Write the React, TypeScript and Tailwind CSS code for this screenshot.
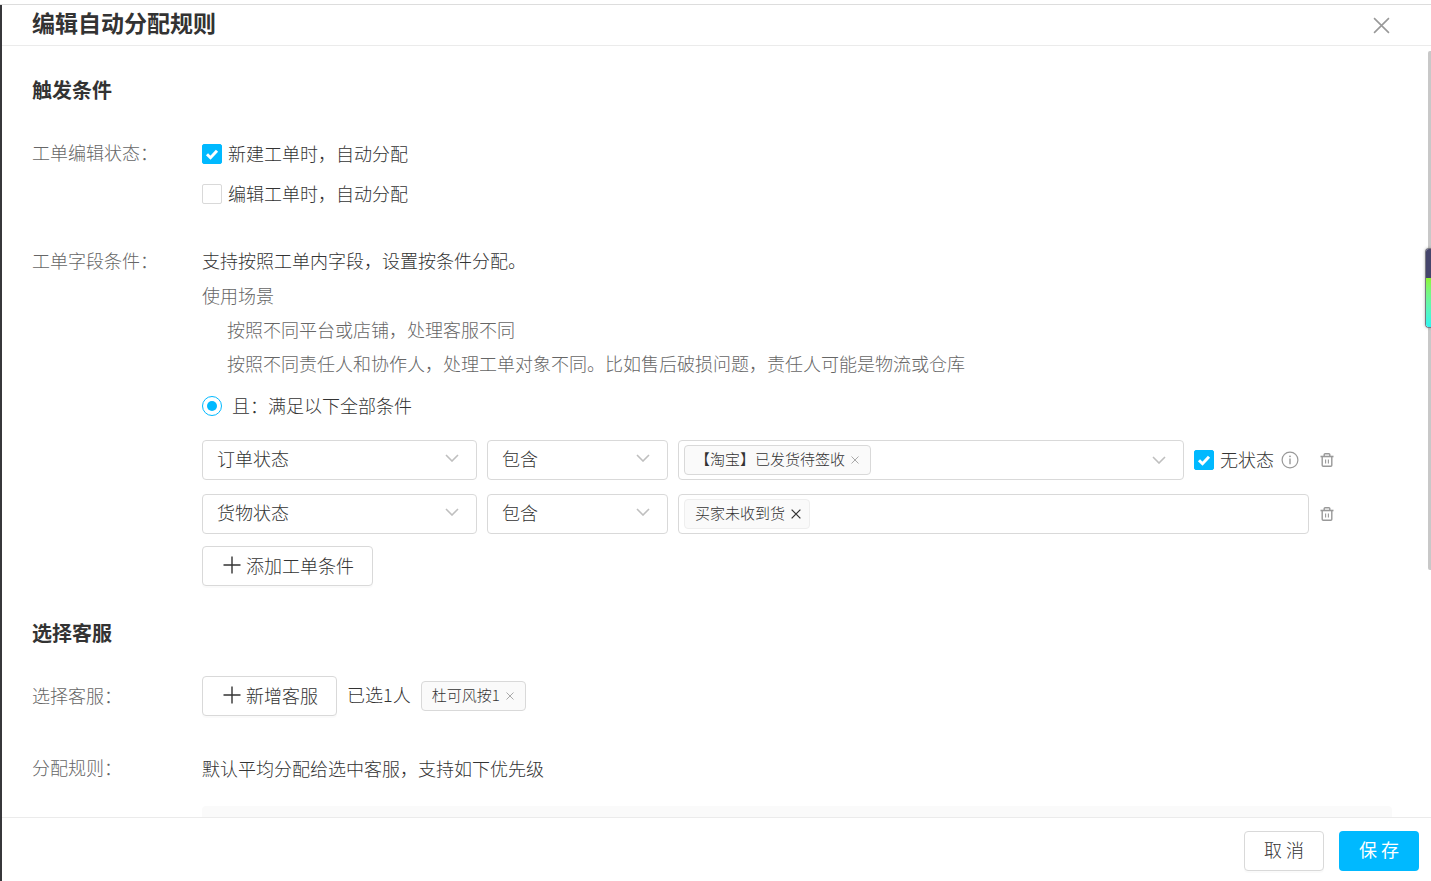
import { useState } from "react";
import type { ReactNode } from "react";

const FIELDS = ["订单状态", "货物状态"];
const OPERATORS = ["包含", "不包含"];

const SCENES = [
  "按照不同平台或店铺，处理客服不同",
  "按照不同责任人和协作人，处理工单对象不同。比如售后破损问题，责任人可能是物流或仓库",
];

/* ICONS */

function CloseIcon({ className }: { className: string }) {
  return (
    <svg className={className} viewBox="0 0 16 16" fill="none" stroke="currentColor" aria-hidden="true">
      <path d="M1 1l14 14M15 1L1 15" />
    </svg>
  );
}

function ChevronIcon() {
  return (
    <svg className="h-2 w-[14px] shrink-0 text-[#bfbfbf]" viewBox="0 0 14 8" fill="none" stroke="currentColor" strokeWidth={1.6} aria-hidden="true">
      <path d="M1 1l6 6 6-6" />
    </svg>
  );
}

function PlusIcon() {
  return (
    <svg className="h-[18px] w-[18px] shrink-0" viewBox="0 0 18 18" fill="none" stroke="currentColor" strokeWidth={1.4} aria-hidden="true">
      <path d="M9 .5v17M.5 9h17" />
    </svg>
  );
}

function TrashIcon() {
  return (
    <svg className="h-[14px] w-[14px]" viewBox="0 0 14 14" fill="none" stroke="currentColor" aria-hidden="true">
      <path d="M.5 3.5h13" strokeWidth={1.6} />
      <path d="M4.2 3.5V1.6q0-.9.9-.9h3.8q.9 0 .9.9v1.9" strokeWidth={1.4} />
      <path d="M2.2 3.5v8.8q0 1 1 1h7.6q1 0 1-1V3.5" strokeWidth={1.4} />
      <path d="M5.6 6.5v4M8.4 6.5v4" strokeWidth={1.1} />
    </svg>
  );
}

function InfoIcon() {
  return (
    <svg className="h-[18px] w-[18px] shrink-0 text-[#999]" viewBox="0 0 18 18" fill="none" stroke="currentColor" aria-hidden="true">
      <circle cx="9" cy="9" r="7.9" strokeWidth={1.2} />
      <path d="M9 7.6v5.6" strokeWidth={1.4} />
      <circle cx="9" cy="5.3" r=".9" fill="currentColor" stroke="none" />
    </svg>
  );
}

/* CONTROLS */

function Checkbox({ label, checked = false }: { label: string; checked?: boolean }) {
  return (
    <label className="flex items-center gap-[6px] cursor-pointer whitespace-nowrap">
      <span className="relative flex h-5 w-5 shrink-0">
        <input
          type="checkbox"
          defaultChecked={checked}
          className="peer h-5 w-5 appearance-none rounded-xs border border-[#d9d9d9] bg-white checked:border-[#00b9ff] checked:bg-[#00b9ff]"
        />
        <svg className="pointer-events-none absolute inset-0 hidden peer-checked:block" viewBox="0 0 20 20" fill="none" stroke="#fff" strokeWidth={3} aria-hidden="true">
          <path d="M5 10.2l3.5 3.5 6.5-6.9" />
        </svg>
      </span>
      <span className="pb-[2px]">{label}</span>
    </label>
  );
}

function Select({ label, options, value, className }: { label: string; options: string[]; value: string; className: string }) {
  return (
    <div className={`relative shrink-0 ${className}`}>
      <select
        aria-label={label}
        defaultValue={value}
        className="h-10 w-full appearance-none rounded border border-[#d9d9d9] bg-white pl-[14px] pr-10 pb-1 font-light"
      >
        {options.map((o) => (
          <option key={o}>{o}</option>
        ))}
      </select>
      <span className="pointer-events-none absolute right-[18px] top-[14px]">
        <ChevronIcon />
      </span>
    </div>
  );
}

function Tag({ text, soft = false }: { text: string; soft?: boolean }) {
  const [open, setOpen] = useState(true);
  if (!open) return null;
  return (
    <span
      className={`flex h-[30px] shrink-0 items-center gap-[6px] rounded border bg-[#fafafa] pl-[10px] text-[15px] whitespace-nowrap ${
        soft ? "border-[#eee] pr-2" : "border-[#d9d9d9] pr-[11px]"
      }`}
    >
      <span className="pb-[2px]">{text}</span>
      <button type="button" aria-label={`移除 ${text}`} onClick={() => setOpen(false)}>
        {soft ? <CloseIcon className="h-[10px] w-[10px] stroke-2" /> : <CloseIcon className="h-2 w-2 stroke-2 text-[#aaa]" />}
      </button>
    </span>
  );
}

function AddButton({ children }: { children: ReactNode }) {
  return (
    <button
      type="button"
      className="flex h-10 shrink-0 items-center gap-[5px] rounded border border-[#d9d9d9] bg-white pl-5 pr-[18px] pb-[3px] whitespace-nowrap shadow-[0_2px_0_rgba(0,0,0,0.02)]"
    >
      <PlusIcon />
      {children}
    </button>
  );
}

function DeleteButton() {
  return (
    <button type="button" aria-label="删除条件" className="shrink-0 text-[#999]">
      <TrashIcon />
    </button>
  );
}

function FormRow({ label, className, labelClass, children }: { label: string; className: string; labelClass: string; children: ReactNode }) {
  return (
    <div className={`flex ${className}`}>
      <div className={`flex w-[170px] shrink-0 items-center pb-[2px] text-[#666] ${labelClass}`}>{label}</div>
      <div className="min-w-0 flex-1">{children}</div>
    </div>
  );
}

export default function App() {
  return (
    <div className="h-screen bg-white pt-1 font-['Noto_Sans_CJK_SC','Liberation_Sans',sans-serif] text-lg font-light text-[#333]">
      <div className="relative flex h-full flex-col overflow-hidden border-t border-[#ddd]">
        <div className="flex min-h-0 flex-1 flex-col border-l-2 border-[#37373a]">

          {/* HEADER */}
          <header className="flex h-[41px] shrink-0 items-center justify-between border-b border-[#ebebeb] pl-[30px] pr-[41px]">
            <h1 className="pb-1 text-[23px] font-bold">编辑自动分配规则</h1>
            <button type="button" aria-label="关闭" className="text-[#999]">
              <CloseIcon className="h-[17px] w-[17px] stroke-[1.5]" />
            </button>
          </header>

          {/* FORM */}
          <main className="min-h-0 flex-1 overflow-hidden pl-[30px] pr-[39px] pt-[29px]">
            <h2 className="text-xl leading-[30px] font-bold">触发条件</h2>

            <FormRow label="工单编辑状态：" className="mt-[29px]" labelClass="h-[38px]">
              <div className="flex h-10 items-center">
                <Checkbox label="新建工单时，自动分配" checked />
              </div>
              <div className="flex h-10 items-center">
                <Checkbox label="编辑工单时，自动分配" />
              </div>
            </FormRow>

            <FormRow label="工单字段条件：" className="mt-7" labelClass="h-[38px]">
              <p className="leading-9">支持按照工单内字段，设置按条件分配。</p>
              <div className="text-[#666]">
                <p className="leading-[34px]">使用场景</p>
                <ul className="pl-[25px] leading-[34px]">
                  {SCENES.map((s) => (
                    <li key={s}>{s}</li>
                  ))}
                </ul>
              </div>

              <label className="mt-2 flex h-9 items-center gap-[10px]">
                <input
                  type="radio"
                  name="match"
                  defaultChecked
                  className="h-5 w-5 appearance-none rounded-full border border-[#00b9ff] bg-white p-1 checked:bg-[#00b9ff] checked:bg-clip-content"
                />
                <span className="pb-[2px]">且：满足以下全部条件</span>
              </label>

              <div className="mt-4 flex items-center gap-[10px] pr-[58px]">
                <Select label="字段" options={FIELDS} value="订单状态" className="w-[275px]" />
                <Select label="运算" options={OPERATORS} value="包含" className="w-[181px]" />
                <div className="flex h-10 min-w-0 flex-1 items-center justify-between rounded border border-[#d9d9d9] pl-[5px] pr-[17px]">
                  <Tag text="【淘宝】已发货待签收" />
                  <ChevronIcon />
                </div>
                <div className="flex items-center gap-[7px]">
                  <Checkbox label="无状态" checked />
                  <InfoIcon />
                </div>
                <div className="flex pl-[11px]">
                  <DeleteButton />
                </div>
              </div>

              <div className="mt-[14px] flex items-center gap-[11px] pr-[58px]">
                <div className="flex min-w-0 flex-1 gap-[10px]">
                  <Select label="字段" options={FIELDS} value="货物状态" className="w-[275px]" />
                  <Select label="运算" options={OPERATORS} value="包含" className="w-[181px]" />
                  <div className="flex h-10 min-w-0 flex-1 items-center rounded border border-[#d9d9d9] pl-[5px]">
                    <Tag text="买家未收到货" soft />
                    <input aria-label="货物状态值" className="ml-2 h-8 min-w-0 flex-1 outline-none" />
                  </div>
                </div>
                <DeleteButton />
              </div>

              <div className="mt-3 flex">
                <AddButton>添加工单条件</AddButton>
              </div>
            </FormRow>

            <h2 className="mt-8 text-xl leading-[30px] font-bold">选择客服</h2>

            <FormRow label="选择客服：" className="mt-7" labelClass="h-10">
              <div className="flex items-center gap-[10px]">
                <AddButton>新增客服</AddButton>
                <span className="pb-1">已选1人</span>
                <Tag text="杜可风按1" />
              </div>
            </FormRow>

            <FormRow label="分配规则：" className="mt-8" labelClass="h-10">
              <p className="leading-10">默认平均分配给选中客服，支持如下优先级</p>
              <div className="mt-[18px] h-40 rounded bg-[#fafafa]" />
            </FormRow>
          </main>

          {/* FOOTER */}
          <footer className="flex h-16 shrink-0 items-center justify-end gap-[15px] border-t border-[#ebebeb] pr-3 pt-[2px]">
            <button type="button" className="h-10 w-20 rounded border border-[#d9d9d9] bg-white pb-1 shadow-[0_2px_0_rgba(0,0,0,0.02)]">
              取 消
            </button>
            <button type="button" className="h-10 w-20 rounded bg-[#00b9ff] pb-1 font-normal text-white">
              保 存
            </button>
          </footer>
        </div>

        {/* scroll thumb and the side dock lie over the drawer's right edge */}
        <div className="absolute right-0 top-[46px] h-[519px] w-[3px] rounded-l-xs bg-[#c8c8c8]" />
        <div className="absolute right-0 top-[243px] flex h-20 w-[6px] flex-col overflow-hidden rounded-l border-y border-l border-[#77777f] shadow-[0_0_3px_rgba(0,0,0,0.3)]">
          <div className="h-[29px] bg-[#45456b]" />
          <div className="flex-1 bg-linear-to-b from-[#8df52c] to-[#2cf5f0]" />
        </div>
      </div>
    </div>
  );
}
